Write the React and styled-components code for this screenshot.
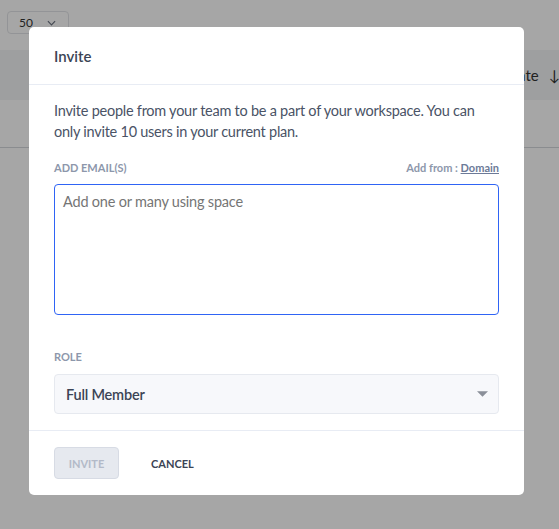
import styled, { createGlobalStyle } from "styled-components";

const GlobalStyle = createGlobalStyle`
	html, body {
		margin: 0;
		padding: 0;
		background: #ffffff;
	}
	body {
		font-family: "Lato", "Liberation Sans", sans-serif;
	}
`;

export default function App() {
	return (
		<Page>
			<GlobalStyle />
			<TopBar>
				<PageSelect>
					<span>50</span>
					<Chevron viewBox="0 0 10 6">
						<path d="M1 1l4 4 4-4" fill="none" stroke="#6b7280" strokeWidth="1.3" />
					</Chevron>
				</PageSelect>
			</TopBar>
			<TableHead>
				<HeadCell>
					Date<SortArrow>↓</SortArrow>
				</HeadCell>
			</TableHead>
			<TableRow />

			<Overlay>
				<Modal>
					<ModalHeader>Invite</ModalHeader>
					<ModalBody>
						<Intro>
							Invite people from your team to be a part of your workspace. You can
							<br />
							only invite 10 users in your current plan.
						</Intro>

						<LabelRow>
							<FieldLabel>ADD EMAIL(S)</FieldLabel>
							<AddFrom>
								Add from : <DomainLink>Domain</DomainLink>
							</AddFrom>
						</LabelRow>
						<EmailInput placeholder="Add one or many using space" />

						<FieldLabel $spaced>ROLE</FieldLabel>
						<RoleSelect>
							<span>Full Member</span>
							<Caret viewBox="0 0 12 6">
								<path d="M0 0h12L6 6z" fill="#8a8f99" />
							</Caret>
						</RoleSelect>
					</ModalBody>
					<ModalFooter>
						<InviteButton disabled>INVITE</InviteButton>
						<CancelButton>CANCEL</CancelButton>
					</ModalFooter>
				</Modal>
			</Overlay>
		</Page>
	);
}

const Page = styled.div`
	position: relative;
	width: 559px;
	height: 529px;
	overflow: hidden;
	background: #ffffff;
`;

const TopBar = styled.div`
	height: 50px;
	padding: 11px 7px 0;
	box-sizing: border-box;
`;

const PageSelect = styled.div`
	width: 62px;
	height: 23px;
	box-sizing: border-box;
	border: 1px solid #e2e4e8;
	border-radius: 4px;
	display: flex;
	align-items: center;
	justify-content: flex-end;
	gap: 14px;
	padding-right: 12px;
	font-size: 12px;
	color: #333;
`;

const Chevron = styled.svg`
	width: 9px;
	height: 6px;
`;

const TableHead = styled.div`
	height: 50px;
	background: #f3f4f6;
	display: flex;
	align-items: center;
	justify-content: flex-end;
`;

const HeadCell = styled.div`
	font-size: 15px;
	color: #333;
	margin-right: -1px;
	white-space: nowrap;
`;

const SortArrow = styled.span`
	margin-left: 10px;
`;

const TableRow = styled.div`
	height: 47px;
	border-bottom: 1px solid #d4d7dc;
`;

const Overlay = styled.div`
	position: absolute;
	inset: 0;
	background: rgba(0, 0, 0, 0.35);
	padding: 27px 35px 0 29px;
`;

const Modal = styled.div`
	width: 495px;
	height: 468px;
	background: #ffffff;
	border-radius: 5px;
	display: flex;
	flex-direction: column;
	box-sizing: border-box;
`;

const ModalHeader = styled.div`
	height: 58px;
	box-sizing: border-box;
	padding: 20px 25px 0;
	border-bottom: 1px solid #e8ecf4;
	font-size: 15px;
	font-weight: 600;
	color: #3b4455;
`;

const ModalBody = styled.div`
	padding: 15px 25px 16px;
	border-bottom: 1px solid #e8ecf4;
	display: flex;
	flex-direction: column;
`;

const Intro = styled.p`
	margin: 0 0 19px;
	font-size: 14.5px;
	letter-spacing: -0.25px;
	line-height: 21px;
	color: #4a5366;
	white-space: nowrap;
`;

const LabelRow = styled.div`
	display: flex;
	justify-content: space-between;
	align-items: center;
	margin-bottom: 10px;
`;

const FieldLabel = styled.div`
	font-size: 11px;
	font-weight: 700;
	color: #8d97ab;
	margin-top: ${(p) => (p.$spaced ? "35px" : "0")};
	margin-bottom: ${(p) => (p.$spaced ? "11px" : "0")};
`;

const AddFrom = styled.div`
	font-size: 11px;
	font-weight: 700;
	color: #8d97ab;
`;

const DomainLink = styled.a`
	color: #6c7a98;
	text-decoration: underline;
	cursor: pointer;
`;

const EmailInput = styled.textarea`
	height: 131px;
	box-sizing: border-box;
	resize: none;
	border: 1px solid #2f64f5;
	border-radius: 4px;
	padding: 8px 8px;
	font-family: "Lato", "Liberation Sans", sans-serif;
	font-size: 14.5px;
	letter-spacing: -0.2px;
	outline: none;

	::placeholder {
		color: #9aa2b1;
	}
`;

const RoleSelect = styled.div`
	height: 40px;
	box-sizing: border-box;
	border: 1px solid #e6e9ef;
	border-radius: 4px;
	background: #f7f8fb;
	display: flex;
	align-items: center;
	justify-content: space-between;
	padding: 0 10px 0 11px;
	font-size: 14.5px;
	letter-spacing: -0.2px;
	font-weight: 600;
	color: #3b4455;
`;

const Caret = styled.svg`
	width: 11px;
	height: 6px;
`;

const ModalFooter = styled.div`
	display: flex;
	align-items: center;
	gap: 32px;
	padding: 16px 25px;
`;

const InviteButton = styled.button`
	width: 65px;
	height: 32px;
	border: 1px solid #d7dbe4;
	border-radius: 4px;
	background: #e6e9ef;
	font-family: "Lato", "Liberation Sans", sans-serif;
	font-size: 11px;
	font-weight: 700;
	color: #b3bac8;
`;

const CancelButton = styled.button`
	border: none;
	background: none;
	padding: 0;
	font-family: "Lato", "Liberation Sans", sans-serif;
	font-size: 11px;
	font-weight: 700;
	color: #3b4455;
`;
